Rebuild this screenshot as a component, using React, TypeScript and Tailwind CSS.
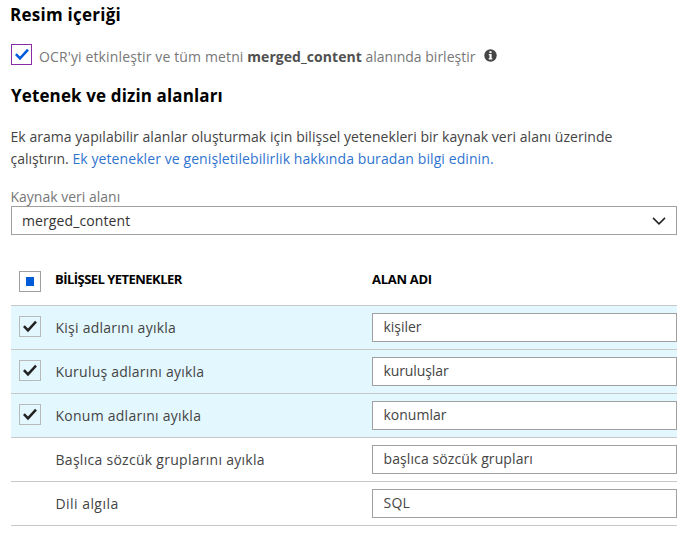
type Skill = { label: string; field: string; checked: boolean; labelTracking: string; fieldTracking: string };

const skills: Skill[] = [
  { label: "Kişi adlarını ayıkla", field: "kişiler", checked: true, labelTracking: "tracking-[0.25px]", fieldTracking: "tracking-[-0.03px]" },
  { label: "Kuruluş adlarını ayıkla", field: "kuruluşlar", checked: true, labelTracking: "tracking-[0.23px]", fieldTracking: "tracking-[-0.1px]" },
  { label: "Konum adlarını ayıkla", field: "konumlar", checked: true, labelTracking: "tracking-[0.25px]", fieldTracking: "tracking-[0px]" },
  { label: "Başlıca sözcük gruplarını ayıkla", field: "başlıca sözcük grupları", checked: false, labelTracking: "tracking-[0.28px]", fieldTracking: "tracking-[0.1px]" },
  { label: "Dili algıla", field: "SQL", checked: false, labelTracking: "tracking-[0.45px]", fieldTracking: "tracking-[0.2px]" },
];

function Check({ className }: { className: string }) {
  return (
    <svg width="14" height="13" viewBox="0 0 14 13" fill="none" className={className}>
      <path d="M0.9 6.2 L5 10.4 L13 1.7" stroke="currentColor" strokeWidth="2.5" />
    </svg>
  );
}

function InfoIcon() {
  return (
    <svg width="13" height="13" viewBox="0 0 13 13" className="mt-[5px] ml-[8.5px] shrink-0">
      <circle cx="6.5" cy="6.5" r="6.2" fill="#454545" />
      <path d="M5.4 2.2h2.2v1.9H5.4zM4.8 5.1h2.8v4.2h.7v1.2H4.7V9.3h.8V6.2h-.7z" fill="#fff" />
    </svg>
  );
}

export default function App() {
  return (
    <main className="h-[542px] w-[691px] overflow-hidden bg-white pt-[3px] pr-3.5 pl-[11px] font-['Open_Sans','Noto_Sans',sans-serif] text-sm whitespace-nowrap text-[#444]">
      <h1 className="-ml-px text-[17px] leading-6 font-bold tracking-[0.25px] text-black">Resim içeriği</h1>

      <div className="mt-[17px] flex h-[22px] items-start">
        <span className="flex size-[21px] shrink-0 items-center justify-center border border-[#8a2da5]">
          <Check className="text-[#015cda]" />
        </span>
        <p className="mt-0.5 ml-[7px] leading-[22px] text-[#777]">
          <span className="tracking-[0.13px]">OCR'yi etkinleştir ve tüm metni </span>
          <b className="font-bold tracking-[0.05px] text-[#505050]">merged_content</b>
          <span> alanında birleştir</span>
        </p>
        <InfoIcon />
      </div>

      <h2 className="mt-[18px] text-[17px] leading-6 font-bold tracking-[0.13px] text-black">Yetenek ve dizin alanları</h2>

      <p className="mt-[18px] -ml-[0.5px] leading-[22px]">
        <span className="tracking-[0.042px]">
          Ek arama yapılabilir alanlar oluşturmak için bilişsel yetenekleri bir kaynak veri alanı üzerinde
        </span>
        <br />
        çalıştırın. <a className="tracking-[0.09px] text-[#2f74d0]">Ek yetenekler ve genişletilebilirlik hakkında buradan bilgi edinin.</a>
      </p>

      <label className="mt-[17px] -ml-[0.5px] block h-[19px] leading-5 text-[#777]">Kaynak veri alanı</label>
      <div className="flex h-[29px] w-[666px] items-center justify-between border border-[#a0a0a0] pr-2.5 pl-2.5 text-[#333]">
        <span className="leading-5 tracking-[0.1px]">merged_content</span>
        <svg width="14" height="8" viewBox="0 0 14 8" fill="none" className="mt-px">
          <path d="M1 0.9 L7 6.9 L13 0.9" stroke="#222" strokeWidth="1.5" />
        </svg>
      </div>

      <section className="mt-[18px] w-[666px]">
        <div className="flex h-[52px] items-center text-[13px] font-bold text-black">
          <span className="mt-[5px] ml-2 flex h-[21px] w-[22px] items-center justify-center border border-[#a0a0a0]">
            <span className="h-[9px] w-2 bg-[#015cda]" />
          </span>
          <span className="ml-3.5 w-[317px] leading-5 tracking-[-0.53px]">BİLİŞSEL YETENEKLER</span>
          <span className="leading-5 tracking-[-0.3px]">ALAN ADI</span>
        </div>
        {skills.map((s) => (
          <div
            key={s.label}
            className={`flex h-11 items-center border-t border-[#c8c8c8] last:h-[45px] last:border-b ${s.checked ? "bg-[#e3f7fe]" : "bg-white"}`}
          >
            <span
              className={`mb-[2px] ml-2 flex h-[21px] w-[22px] items-center justify-center border border-[#b9b9b9] ${s.checked ? "" : "invisible"}`}
            >
              <Check className="text-[#222]" />
            </span>
            <span className={`ml-[14.5px] w-[316.5px] leading-5 ${s.labelTracking}`}>{s.label}</span>
            <div className="h-[29px] w-[305px] border border-[#a0a0a0] bg-white px-[10.5px]">
              <span className={`block leading-[25px] ${s.fieldTracking}`}>{s.field}</span>
            </div>
          </div>
        ))}
      </section>
    </main>
  );
}
